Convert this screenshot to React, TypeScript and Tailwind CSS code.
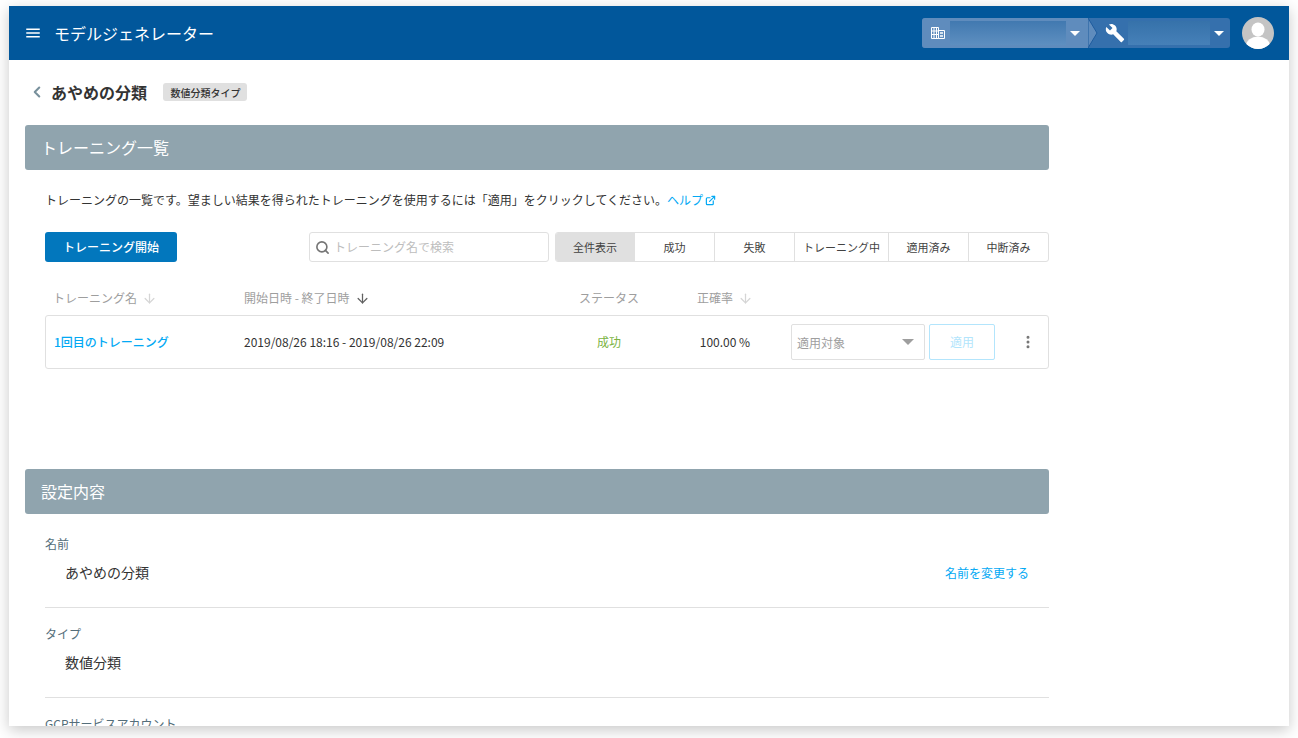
import { ArrowDown, ChevronLeft, EllipsisVertical, ExternalLink, Search } from "lucide-react";

const filters = [
    { label: "全件表示", width: "w-[78px]", active: true },
    { label: "成功", width: "w-[80px]" },
    { label: "失敗", width: "w-[80px]" },
    { label: "トレーニング中", width: "w-[94px]" },
    { label: "適用済み", width: "w-[80px]" },
    { label: "中断済み", width: "w-[80px]" },
];

function Caret() {
    return <span className="block w-0 h-0 border-x-[5px] border-x-transparent border-t-[5px] border-t-white" />;
}

function MenuIcon() {
    return (
        <svg width="18" height="18" viewBox="0 0 24 24" fill="white">
            <path d="M3 18h18v-2H3v2zm0-5h18v-2H3v2zm0-7v2h18V6H3z" />
        </svg>
    );
}

function WrenchIcon() {
    return (
        <svg width="20" height="20" viewBox="0 0 24 24" fill="white">
            <path d="M22.7 19l-9.1-9.1c.9-2.3.4-5-1.5-6.9-2-2-5-2.4-7.4-1.3L9 6 6 9 1.6 4.7C.4 7.1.9 10.1 2.9 12.1c1.9 1.9 4.6 2.4 6.9 1.5l9.1 9.1c.4.4 1 .4 1.4 0l2.3-2.3c.5-.4.5-1.1.1-1.4z" />
        </svg>
    );
}

function BuildingIcon() {
    return (
        <svg width="14" height="14" viewBox="0 0 14 14" fill="none" stroke="white" strokeWidth="1">
            <path d="M.5 1.5h7v11h-7zM7.5 4.5h6v8h-6zM.5 5h7M.5 8.5h7M3 1.5v11M5.5 1.5v11" />
            <path d="M9 7h3M9 10h3" strokeWidth="1.5" />
        </svg>
    );
}

function Avatar() {
    return (
        <svg width="32" height="32" viewBox="0 0 32 32">
            <defs>
                <clipPath id="avatar">
                    <circle cx="16" cy="16" r="16" />
                </clipPath>
            </defs>
            <g clipPath="url(#avatar)">
                <rect width="32" height="32" fill="#c4c4c4" />
                <ellipse cx="16" cy="12.5" rx="6.5" ry="7" fill="white" />
                <ellipse cx="16" cy="29" rx="12" ry="9.5" fill="white" />
            </g>
        </svg>
    );
}

function SectionHeader({ title }: { title: string }) {
    return (
        <div className="h-[45px] w-[1024px] flex items-center pl-[16px] pb-[2px] bg-[#90a4ae] rounded-[3px] text-white text-[16px]">
            {title}
        </div>
    );
}

function SortHead({ label, dark, className }: { label: string; dark?: boolean; className: string }) {
    return (
        <div className={`flex items-center gap-[5px] ${className}`}>
            <span>{label}</span>
            {dark ? (
                <ArrowDown size={15} className="text-[#616161]" />
            ) : (
                <ArrowDown size={15} className="text-[#d5d5d5]" />
            )}
        </div>
    );
}

function Setting({ label, value, action, className }: { label: string; value: string; action?: string; className: string }) {
    return (
        <div className={`border-b border-[#e0e0e0] ${className}`}>
            <div className="text-[12px] leading-[18px] text-[#546e7a]">{label}</div>
            <div className="flex items-center justify-between mt-[8px] pl-[20px] pr-[20px]">
                <span className="text-[14px] leading-[22px] text-[#333333]">{value}</span>
                {action && <span className="pt-[2px] text-[12px] text-[#03a9f4]">{action}</span>}
            </div>
        </div>
    );
}

export default function App() {
    return (
        <div
            className="h-[738px] pt-[6px] pl-[9px] bg-white overflow-hidden"
            style={{ fontFamily: '"Noto Sans CJK JP", "Noto Sans", sans-serif' }}
        >
            <div className="w-[1280px] h-[720px] bg-white overflow-hidden shadow-[0_4px_14px_rgba(0,0,0,0.22)]">
                <header className="h-[54px] bg-[#01579b] flex items-center pl-[15px] pr-[15px] text-white">
                    <MenuIcon />
                    <span className="ml-[12px] text-[16px]">モデルジェネレーター</span>
                    <div className="ml-auto flex items-center h-[30px] rounded-[3px] overflow-hidden bg-[#3570ad]">
                        <div className="relative flex items-center w-[166px] h-full bg-[#5f8cbd] pl-[9px]">
                            <BuildingIcon />
                            <div className="ml-[5px] w-[116px] h-[24px] bg-gradient-to-b from-[#4179b0] to-[#5e8fc0]" />
                            <span className="ml-[4px]"><Caret /></span>
                            <svg className="absolute left-full top-0" width="10" height="30" viewBox="0 0 10 30">
                                <path d="M0 0L9 15L0 30Z" fill="#5f8cbd" stroke="#1f5c9e" strokeWidth="1" />
                            </svg>
                        </div>
                        <div className="flex items-center w-[142px] h-full pl-[17px]">
                            <WrenchIcon />
                            <div className="ml-[3px] w-[82px] h-[24px] bg-gradient-to-b from-[#3672aa] to-[#4680b8]" />
                            <span className="ml-[4px]"><Caret /></span>
                        </div>
                    </div>
                    <div className="ml-[12px] w-[32px] h-[32px]">
                        <Avatar />
                    </div>
                </header>

                <main className="pl-[16px]">
                    <div className="h-[65px] flex items-center pb-[1px]">
                        <ChevronLeft size={18} strokeWidth={2.8} className="ml-[3px] text-[#78909c]" />
                        <h1 className="ml-[5px] text-[16px] font-bold text-[#333333]">あやめの分類</h1>
                        <span className="ml-[16px] h-[18px] w-[84px] pl-[1px] flex items-center justify-center rounded-[3px] bg-[#e0e0e0] text-[10px] font-medium text-[#333333]">
                            数値分類タイプ
                        </span>
                    </div>

                    <SectionHeader title="トレーニング一覧" />

                    <div className="w-[1024px] pl-[20px]">
                        <p className="mt-[21px] h-[18px] flex items-center text-[12px] text-[#333333]">
                            トレーニングの一覧です。望ましい結果を得られたトレーニングを使用するには「適用」をクリックしてください。
                            <span className="text-[#03a9f4]">ヘルプ</span>
                            <ExternalLink size={11} strokeWidth={2.6} className="ml-[2px] text-[#03a9f4]" />
                        </p>

                        <div className="mt-[23px] flex items-center h-[30px]">
                            <button className="w-[132px] h-[30px] rounded-[3px] bg-[#0277bd] text-white text-[12px] font-medium">
                                トレーニング開始
                            </button>
                            <div className="ml-[132px] w-[240px] h-[30px] flex items-center border border-[#e0e0e0] rounded-[3px] pl-[5px]">
                                <Search size={15} strokeWidth={2.6} className="text-[#757575]" />
                                <span className="ml-[4px] text-[12px] text-[#bdbdbd]">トレーニング名で検索</span>
                            </div>
                            <div className="ml-[6px] flex w-[494px] h-[30px] border border-[#e0e0e0] rounded-[3px] overflow-hidden">
                                {filters.map((f, i) => (
                                    <div
                                        key={f.label}
                                        className={`flex items-center justify-center text-[11px] text-[#424242] ${f.width} ${i > 0 ? "border-l border-[#e0e0e0]" : ""} ${f.active ? "bg-[#e0e0e0]" : ""}`}
                                    >
                                        {f.label}
                                    </div>
                                ))}
                            </div>
                        </div>

                        <div className="mt-[24px] h-[24px] flex items-center text-[12px] text-[#9e9e9e]">
                            <SortHead label="トレーニング名" className="w-[199px] pl-[8px]" />
                            <SortHead label="開始日時 - 終了日時" dark className="w-[335px]" />
                            <div className="w-[118px]">ステータス</div>
                            <SortHead label="正確率" className="w-[100px]" />
                        </div>

                        <div className="mt-[5px] h-[54px] flex items-center border border-[#e0e0e0] rounded-[3px] text-[#333333]">
                            <span className="w-[198px] pl-[8px] text-[12px] font-medium text-[#03a9f4]">1回目のトレーニング</span>
                            <span className="w-[320px] text-[12px]">2019/08/26 18:16 - 2019/08/26 22:09</span>
                            <span className="w-[90px] text-center text-[12px] text-[#7cb342]">成功</span>
                            <span className="ml-[26px] w-[90px] text-center text-[12px]">100.00 %</span>
                            <div className="ml-[21px] w-[134px] h-[36px] flex items-center justify-between border border-[#e0e0e0] rounded-[2px] pl-[5px] pr-[10px]">
                                <span className="pt-[1px] text-[12px] text-[#9e9e9e]">適用対象</span>
                                <span className="w-0 h-0 border-x-[6px] border-x-transparent border-t-[6px] border-t-[#9e9e9e]" />
                            </div>
                            <button className="ml-[4px] w-[66px] h-[36px] border border-[#b3e5fc] rounded-[2px] text-[12px] text-[#b3e5fc]">
                                適用
                            </button>
                            <EllipsisVertical size={16} strokeWidth={2.5} className="ml-[25px] text-[#757575]" />
                        </div>
                    </div>

                    <div className="mt-[100px]">
                        <SectionHeader title="設定内容" />
                    </div>

                    <div className="w-[1024px] pl-[20px]">
                        <Setting label="名前" value="あやめの分類" action="名前を変更する" className="h-[94px] pt-[21px]" />
                        <Setting label="タイプ" value="数値分類" className="h-[90px] pt-[17px]" />
                        <div className="pt-[17px] text-[12px] leading-[18px] text-[#546e7a]">GCPサービスアカウント</div>
                    </div>
                </main>
            </div>
        </div>
    );
}
